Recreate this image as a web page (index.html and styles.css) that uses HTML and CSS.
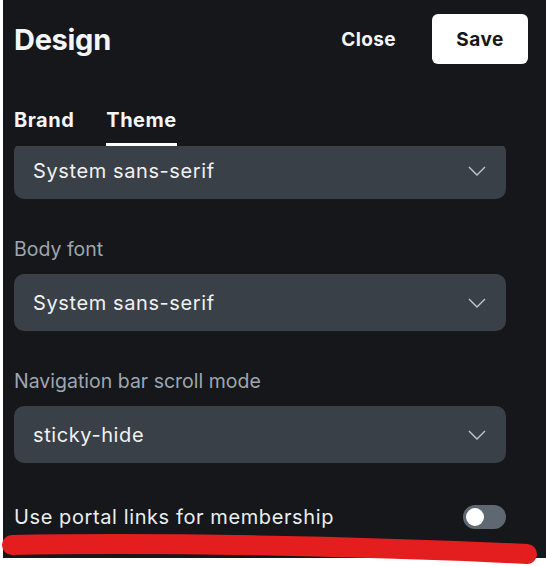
FILE: index.html
```html
<!DOCTYPE html>
<html lang="en">
<head>
<meta charset="utf-8">
<title>Design</title>
<link rel="stylesheet" href="styles.css">
</head>
<body>
<div class="panel">
  <header class="header">
    <h1 class="title">Design</h1>
    <button class="btn-close">Close</button>
    <button class="btn-save">Save</button>
  </header>
  <nav class="tabs">
    <span class="tab">Brand</span>
    <span class="tab tab-active">Theme</span>
  </nav>
  <div class="scroll">
    <div class="content">
      <div class="select">
        <span>System sans-serif</span>
        <svg class="chev" width="18" height="10" viewBox="0 0 18 10"><path d="M1 1 L9 9 L17 1" fill="none" stroke="#c3c7cc" stroke-width="1.4"/></svg>
      </div>
      <div class="field">
        <label class="label">Body font</label>
        <div class="select">
          <span>System sans-serif</span>
          <svg class="chev" width="18" height="10" viewBox="0 0 18 10"><path d="M1 1 L9 9 L17 1" fill="none" stroke="#c3c7cc" stroke-width="1.4"/></svg>
        </div>
      </div>
      <div class="field">
        <label class="label">Navigation bar scroll mode</label>
        <div class="select">
          <span>sticky-hide</span>
          <svg class="chev" width="18" height="10" viewBox="0 0 18 10"><path d="M1 1 L9 9 L17 1" fill="none" stroke="#c3c7cc" stroke-width="1.4"/></svg>
        </div>
      </div>
      <div class="toggle-row">
        <span class="toggle-label">Use portal links for membership</span>
        <span class="toggle"><span class="knob"></span></span>
      </div>
    </div>
  </div>
</div>
<svg class="scribble" width="546" height="566" viewBox="0 0 546 566"><path d="M12 545 C 150 542, 360 546, 527 554" fill="none" stroke="#e41e1f" stroke-width="20" stroke-linecap="round"/></svg>
</body>
</html>
```
FILE: styles.css
```css
* { box-sizing: border-box; }
html, body { margin: 0; padding: 0; }
body {
  background: #ffffff;
  font-family: Inter, "Noto Sans", sans-serif;
  width: 546px;
  height: 566px;
  overflow: hidden;
  position: relative;
}
.panel {
  margin-left: 3px;
  height: 558px;
  background: #15171a;
  padding: 14px 18px 0 11px;
  display: flex;
  flex-direction: column;
}
.header {
  display: flex;
  align-items: center;
  height: 50px;
}
.title {
  flex: 1;
  margin: 0;
  font-size: 29px;
  font-weight: 700;
  letter-spacing: -0.3px;
  color: #f4f5f6;
}
.btn-close {
  background: none;
  border: 0;
  padding: 0;
  margin-right: 36px;
  font-family: inherit;
  font-size: 19px;
  font-weight: 700;
  letter-spacing: 0.4px;
  color: #f4f5f6;
}
.btn-save {
  width: 96px;
  height: 50px;
  background: #ffffff;
  border: 0;
  border-radius: 6px;
  font-family: inherit;
  font-size: 19px;
  font-weight: 700;
  letter-spacing: 0.5px;
  color: #15171a;
}
.tabs {
  display: flex;
  gap: 32px;
  margin-top: 44px;
}
.tab {
  font-size: 20px;
  font-weight: 700;
  line-height: 24px;
  letter-spacing: 0.5px;
  color: #f4f5f6;
  padding-bottom: 11px;
  border-bottom: 3px solid transparent;
}
.tab-active { border-bottom-color: #ffffff; }
.scroll {
  flex: 1;
  overflow: hidden;
  padding-right: 22px;
}
.content {
  margin-top: -4px;
  display: flex;
  flex-direction: column;
  gap: 38px;
}
.field {
  display: flex;
  flex-direction: column;
  gap: 13px;
}
.label {
  font-size: 19.5px;
  line-height: 24px;
  color: #9ea6b0;
}
.select {
  height: 57px;
  background: #394047;
  border-radius: 10px;
  padding: 0 20px 0 19px;
  display: flex;
  align-items: center;
  justify-content: space-between;
  font-size: 20px;
  letter-spacing: 0.6px;
  color: #f1f2f3;
}
.chev { display: block; }
.toggle-row {
  margin-top: 2px;
  height: 28px;
  display: flex;
  align-items: center;
  justify-content: space-between;
}
.toggle-label {
  font-size: 20px;
  line-height: 24px;
  letter-spacing: 0.6px;
  color: #eceef0;
}
.toggle {
  width: 43px;
  height: 24px;
  border-radius: 12px;
  background: #5f6771;
  display: flex;
  align-items: center;
  padding-left: 3px;
}
.knob {
  width: 18px;
  height: 18px;
  border-radius: 50%;
  background: #ffffff;
}
.scribble {
  position: absolute;
  left: 0;
  top: 0;
  pointer-events: none;
}
```
